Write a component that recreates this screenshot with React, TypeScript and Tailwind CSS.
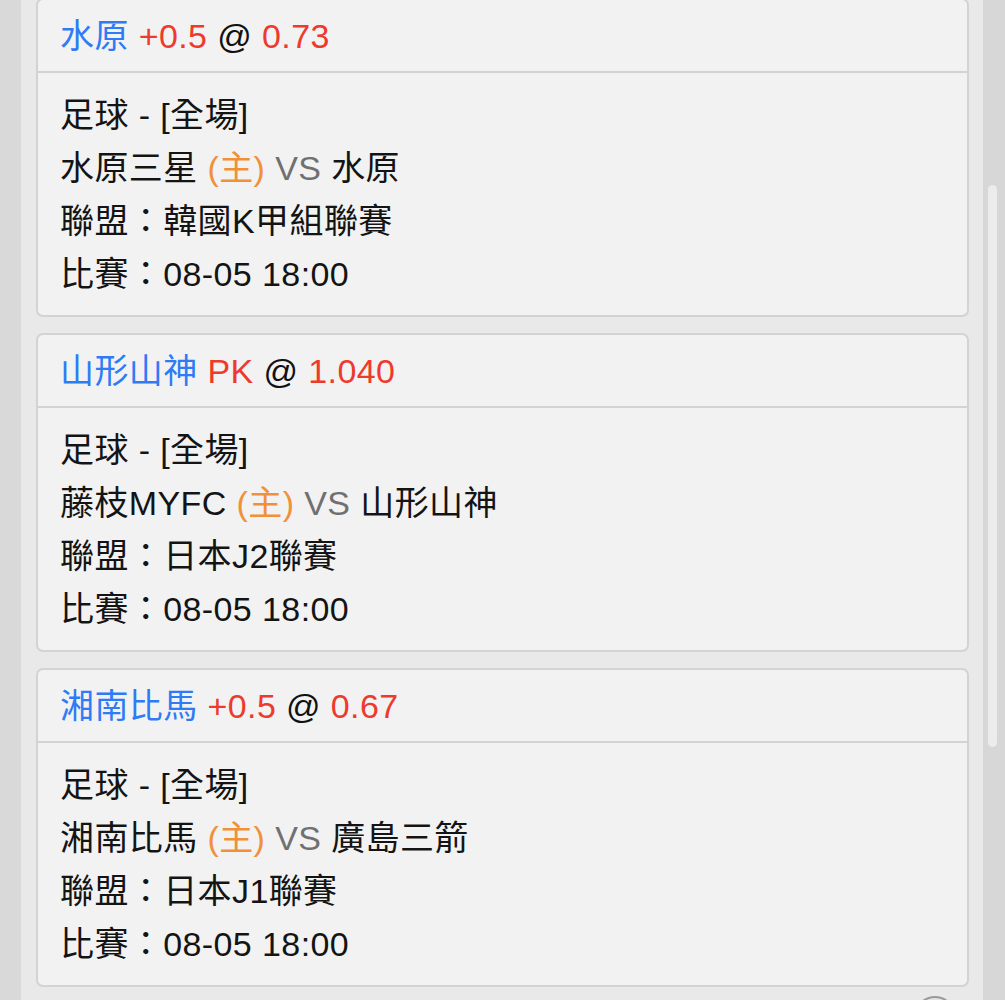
import React from "react";

type Bet = {
  pick: string;
  line: string;
  odds: string;
  home: string;
  away: string;
  league: string;
  time: string;
};

const bets: Bet[] = [
  { pick: "水原", line: "+0.5", odds: "0.73", home: "水原三星", away: "水原", league: "韓國K甲組聯賽", time: "08-05 18:00" },
  { pick: "山形山神", line: "PK", odds: "1.040", home: "藤枝MYFC", away: "山形山神", league: "日本J2聯賽", time: "08-05 18:00" },
  { pick: "湘南比馬", line: "+0.5", odds: "0.67", home: "湘南比馬", away: "廣島三箭", league: "日本J1聯賽", time: "08-05 18:00" },
];

function Card({ b }: { b: Bet }) {
  return (
    <div className="border-2 border-[#d3d3d3] rounded-[7px] bg-[#f2f2f2] overflow-hidden">
      <div className="h-[73px] border-b-2 border-[#d3d3d3] flex items-center px-[22px] whitespace-pre">
        <span className="text-[#2f7bf5]">{b.pick}</span>
        <span className="text-[#ee3a2c]"> {b.line}</span>
        <span className="text-[#111]"> @ </span>
        <span className="text-[#ee3a2c]">{b.odds}</span>
      </div>
      <div className="px-[22px] pt-[15px] pb-[15px] text-[#141414] whitespace-pre">
        <div className="h-[53px] flex items-center">足球 - [全場]</div>
        <div className="h-[53px] flex items-center">
          <span>{b.home}</span>
          <span className="text-[#f0913a]"> (主)</span>
          <span className="text-[#707070]"> VS </span>
          <span>{b.away}</span>
        </div>
        <div className="h-[53px] flex items-center">聯盟：{b.league}</div>
        <div className="h-[53px] flex items-center">比賽：{b.time}</div>
      </div>
    </div>
  );
}

export default function App() {
  return (
    <div
      className="relative w-[1005px] h-[1000px] overflow-hidden flex text-[34px] leading-none tracking-[0.4px]"
      style={{ fontFamily: '"Liberation Sans", "Noto Sans CJK TC", sans-serif' }}
    >
      <div className="w-[21px] bg-[#d9d9d9] shrink-0" />
      <div className="flex-1 bg-[#e9e9e9] pl-[15px] pr-[14px]">
        <div className="-mt-[2px] flex flex-col gap-4">
          {bets.map((b, i) => (
            <Card key={i} b={b} />
          ))}
        </div>
      </div>
      <div className="w-[22px] bg-[#d7d7d7] shrink-0 pt-[185px] pl-[5px]">
        <div className="w-[9px] h-[562px] rounded-full bg-[#ececec]" />
      </div>
      <div className="absolute left-[914px] top-[996px] w-[42px] h-[42px] rounded-full border-2 border-[#9a9a9a] bg-[#e4e4e4]" />
    </div>
  );
}
